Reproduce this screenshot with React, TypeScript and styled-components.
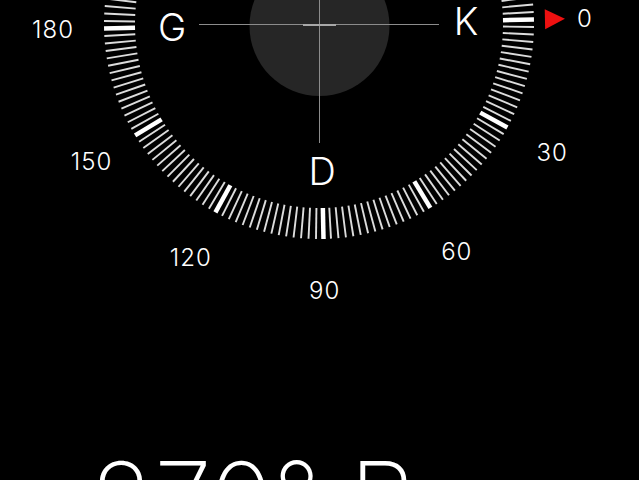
import React from 'react'
import styled, { createGlobalStyle } from 'styled-components'

const CX = 319
const CY = 24
const OFFSET = -1.2

const GlobalStyle = createGlobalStyle`
  html, body {
    margin: 0;
    padding: 0;
    background: #000;
  }
  #root {
    width: 639px;
    height: 480px;
    overflow: hidden;
  }
`

const Screen = styled.main`
  display: flex;
  flex-direction: column;
  width: 639px;
  height: 480px;
  background: #000;
  overflow: hidden;
  font-family: Inter, 'Liberation Sans', sans-serif;
`

const Dial = styled.svg`
  display: block;
  width: 639px;
  height: 447px;
  flex: none;
`

const Tick = styled.line<{ $major: boolean }>`
  stroke: ${({ $major }) => ($major ? '#ffffff' : '#dcdcdc')};
  stroke-width: ${({ $major }) => ($major ? 4.5 : 1.9)};
`

const Hair = styled.line`
  stroke: #8c8c8c;
  stroke-width: 1;
`

const BubbleMark = styled.line`
  stroke: #a8a8a8;
  stroke-width: 2;
`

const Bubble = styled.circle`
  fill: #262626;
`

const Pointer = styled.polygon`
  fill: #ee1010;
`

const DegreeLabel = styled.text`
  fill: #fff;
  font-family: Inter, 'Liberation Sans', sans-serif;
  font-size: 24px;
  font-weight: 300;
  letter-spacing: 1px;
`

const CardinalLabel = styled.text`
  fill: #fff;
  font-family: Inter, 'Liberation Sans', sans-serif;
  font-size: 38px;
  font-weight: 300;
`

const Heading = styled.div`
  padding-left: 90px;
  color: #fff;
  font-size: 104px;
  font-weight: 200;
  line-height: 1;
  white-space: nowrap;
`

const polar = (deg: number, r: number) => {
  const a = ((deg + OFFSET) * Math.PI) / 180
  return [CX + r * Math.cos(a), CY + r * Math.sin(a)]
}

// only the lower half of the dial is on screen
const onScreen = (d: number) => d <= 180 || d >= 360

const ticks = Array.from({ length: 180 }, (_, i) => i * 2)
const degrees = Array.from({ length: 12 }, (_, i) => i * 30).filter(onScreen)
const cardinals: [string, number][] = [
  ['K', 0],
  ['D', 90],
  ['G', 180],
]

const pointer = () => {
  const [bx, by] = polar(0, 226)
  const [tx, ty] = polar(0, 246)
  const a = ((OFFSET + 90) * Math.PI) / 180
  const dx = 10 * Math.cos(a)
  const dy = 10 * Math.sin(a)
  return `${bx - dx},${by - dy} ${bx + dx},${by + dy} ${tx},${ty}`
}

const App = () => (
  <Screen>
    <GlobalStyle />
    <Dial viewBox="0 0 639 447">
      <Bubble cx={319.5} cy={26} r={70} />
      <Hair x1={199} y1={24.5} x2={439} y2={24.5} />
      <Hair x1={319.5} y1={0} x2={319.5} y2={143} />
      <BubbleMark x1={303} y1={25} x2={336} y2={25} />

      {ticks.map((d) => {
        const [x1, y1] = polar(d, 184)
        const [x2, y2] = polar(d, 215)
        return <Tick key={d} x1={x1} y1={y1} x2={x2} y2={y2} $major={d % 30 === 0} />
      })}

      <Pointer points={pointer()} />

      {degrees.map((d) => {
        const [x, y] = polar(d, 266)
        return (
          <DegreeLabel key={d} x={x} y={y} dy="0.36em" textAnchor="middle">
            {d}
          </DegreeLabel>
        )
      })}

      {cardinals.map(([l, d]) => {
        const [x, y] = polar(d, 147)
        return (
          <CardinalLabel key={l} x={x} y={y} dy="0.36em" textAnchor="middle">
            {l}
          </CardinalLabel>
        )
      })}
    </Dial>
    <Heading>270° B</Heading>
  </Screen>
)

export default App
